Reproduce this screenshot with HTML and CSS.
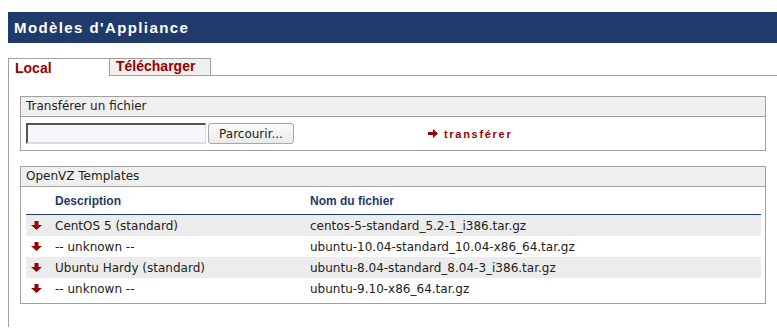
FILE: index.html
```html
<!DOCTYPE html>
<html lang="fr">
<head>
    <meta charset="UTF-8">
    <title>Modèles d'Appliance</title>
    <link rel="stylesheet" href="styles.css">
</head>
<body>
    <div class="page">
        <h1 class="title">Modèles d'Appliance</h1>

        <div class="tabs">
            <div class="tab active">Local</div>
            <div class="tab">Télécharger</div>
        </div>

        <div class="pane">
            <div class="box">
                <div class="box-head">Transférer un fichier</div>
                <div class="box-body upload">
                    <input type="text" class="file-field">
                    <button class="browse">Parcourir...</button>
                    <a class="upload-link" href="#">
                        <svg class="icon-right" width="10" height="9" viewBox="0 0 10 9"><path d="M0 3h5V0l5 4.5L5 9V6H0z"/></svg>
                        transférer
                    </a>
                </div>
            </div>

            <div class="box">
                <div class="box-head">OpenVZ Templates</div>
                <div class="box-body">
                    <table class="templates">
                        <thead>
                            <tr>
                                <th class="col-icon"></th>
                                <th class="col-desc">Description</th>
                                <th>Nom du fichier</th>
                            </tr>
                        </thead>
                        <tbody>
                            <tr>
                                <td class="col-icon"><svg class="icon-down" width="11" height="9" viewBox="0 0 11 9"><path d="M3.5 0h4v4H11L5.5 9 0 4h3.5z"/></svg></td>
                                <td>CentOS 5 (standard)</td>
                                <td>centos-5-standard_5.2-1_i386.tar.gz</td>
                            </tr>
                            <tr>
                                <td class="col-icon"><svg class="icon-down" width="11" height="9" viewBox="0 0 11 9"><path d="M3.5 0h4v4H11L5.5 9 0 4h3.5z"/></svg></td>
                                <td>-- unknown --</td>
                                <td>ubuntu-10.04-standard_10.04-x86_64.tar.gz</td>
                            </tr>
                            <tr>
                                <td class="col-icon"><svg class="icon-down" width="11" height="9" viewBox="0 0 11 9"><path d="M3.5 0h4v4H11L5.5 9 0 4h3.5z"/></svg></td>
                                <td>Ubuntu Hardy (standard)</td>
                                <td>ubuntu-8.04-standard_8.04-3_i386.tar.gz</td>
                            </tr>
                            <tr>
                                <td class="col-icon"><svg class="icon-down" width="11" height="9" viewBox="0 0 11 9"><path d="M3.5 0h4v4H11L5.5 9 0 4h3.5z"/></svg></td>
                                <td>-- unknown --</td>
                                <td>ubuntu-9.10-x86_64.tar.gz</td>
                            </tr>
                        </tbody>
                    </table>
                </div>
            </div>
        </div>
    </div>
</body>
</html>
```

FILE: styles.css
```css
:root {
    --navy: #1f3a6b;
    --red: #990000;
    --line: #a0a0a0;
    --light: #efefef;
}

html, body {
    overflow: hidden;
}

body {
    margin: 0;
    background: #fff;
    color: #222;
    font-family: 'DejaVu Sans', sans-serif;
    font-size: 12px;
}

.page {
    width: 770px;
    margin: 12px 0 0 8px;
}

.title {
    margin: 0;
    height: 31px;
    line-height: 31px;
    padding-left: 6px;
    background: var(--navy);
    color: #fff;
    font-family: 'Liberation Sans', Arial, sans-serif;
    font-size: 15px;
    font-weight: bold;
    letter-spacing: 1.4px;
}

.tabs {
    display: flex;
    margin-top: 15px;
    border-bottom: 1px solid var(--line);
    height: 17px;
}

.tab {
    box-sizing: border-box;
    width: 102px;
    height: 17px;
    padding: 0 6px;
    border: 1px solid var(--line);
    border-bottom: none;
    background: var(--light);
    color: var(--red);
    font-family: 'Liberation Sans', Arial, sans-serif;
    font-size: 14px;
    font-weight: bold;
    line-height: 15px;
}

.tab.active {
    width: 101px;
    height: 18px;
    border-right: none;
    background: #fff;
    line-height: 19px;
}

.pane {
    border-left: 1px solid var(--line);
    border-right: 1px solid var(--line);
    padding: 20px 11px 23px;
}

.box {
    border: 1px solid var(--line);
    margin-bottom: 15px;
}

.box:last-child {
    margin-bottom: 0;
}

.box-head {
    height: 19px;
    line-height: 19px;
    padding-left: 5px;
    background: var(--light);
    border-bottom: 1px solid var(--line);
}

.box-body {
    padding: 0 4px 4px 5px;
}

.upload {
    display: flex;
    align-items: center;
    padding: 6px 5px;
}

.file-field {
    box-sizing: border-box;
    width: 180px;
    height: 21px;
    margin: 0;
    border: 2px solid #555;
    border-right: 1px solid #ddd;
    border-bottom: 2px solid #ddd;
    background: #f4f8fc;
}

.browse {
    box-sizing: border-box;
    width: 86px;
    height: 21px;
    margin-left: 2px;
    padding: 0;
    border: 1px solid #a8a8a8;
    border-radius: 3px;
    background: linear-gradient(#fbfbfb, #e9e9e9);
    color: #222;
    font-family: 'DejaVu Sans', sans-serif;
    font-size: 12px;
}

.upload-link {
    display: flex;
    align-items: center;
    margin-left: 134px;
    color: var(--red);
    text-decoration: none;
    font-family: 'Liberation Sans', Arial, sans-serif;
    font-size: 11px;
    font-weight: bold;
    letter-spacing: 1.7px;
}

.icon-right {
    fill: var(--red);
    margin-right: 6px;
}

.templates {
    width: 100%;
    border-collapse: collapse;
}

.templates th {
    height: 27px;
    padding: 0;
    text-align: left;
    vertical-align: middle;
    color: var(--navy);
    font-family: 'Liberation Sans', Arial, sans-serif;
    font-size: 12px;
    font-weight: bold;
    border-bottom: 1px solid var(--navy);
}

.templates td {
    height: 21px;
    padding: 0;
    white-space: nowrap;
}

.templates tbody tr:nth-child(odd) {
    background: #ececec;
}

.col-icon {
    width: 29px;
}

.col-desc {
    width: 255px;
}

.icon-down {
    display: block;
    fill: var(--red);
    margin-left: 5px;
}
```
